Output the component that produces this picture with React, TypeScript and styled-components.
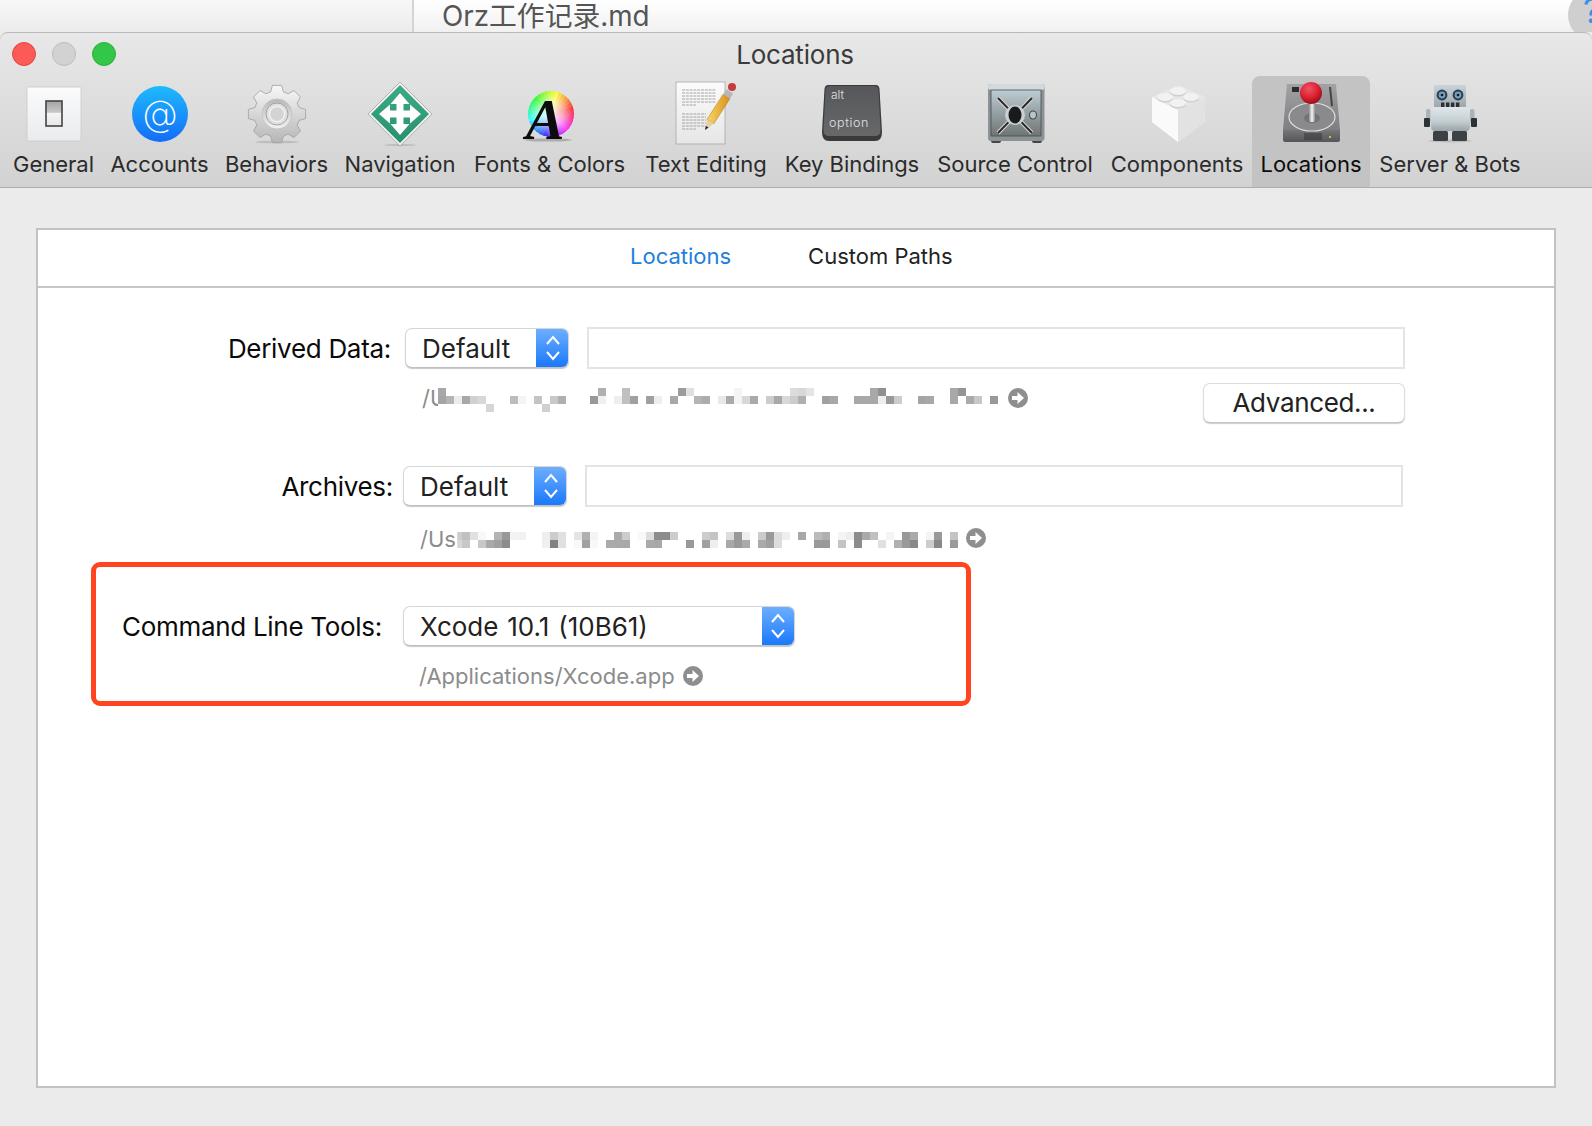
import React from 'react';
import styled, { createGlobalStyle } from 'styled-components';

const GlobalStyle = createGlobalStyle`
  html, body {
    margin: 0;
    padding: 0;
    background: #ebebeb;
    overflow: hidden;
  }
  * {
    box-sizing: border-box;
  }
  body {
    font-family: Inter, "Noto Sans CJK SC", "Liberation Sans", sans-serif;
    color: #222;
  }
`;

const Page = styled.div`
  width: 1592px;
  height: 1126px;
  display: flex;
  flex-direction: column;
`;

const TopStrip = styled.div`
  position: relative;
  height: 32px;
  display: flex;
  overflow: hidden;
  background: linear-gradient(#ffffff, #f1f1f1);
`;

const StripSide = styled.div`
  width: 414px;
  border-right: 2px solid #d4d4d4;
  background: linear-gradient(#f7f7f7, #ececec);
`;

const FileName = styled.div`
  padding: 0 0 0 28px;
  font-size: 27.8px;
  line-height: 32px;
  color: #555;
`;

const HelpBubble = styled.div`
  position: absolute;
  left: 1568px;
  top: -11px;
  width: 52px;
  height: 52px;
  border-radius: 50%;
  background: #cfcfcf;
  color: #3b8fe8;
  font-size: 34px;
  line-height: 44px;
  padding-left: 15px;
`;

const Window = styled.div`
  height: 156px;
  display: flex;
  flex-direction: column;
  border-top: 1px solid #b9b9b9;
  border-bottom: 1px solid #adadad;
  border-radius: 8px 8px 0 0;
  background: linear-gradient(#e8e8e8, #d2d2d2);
`;

const TitleBar = styled.div`
  height: 43px;
  display: grid;
  grid-template-columns: 1fr auto 1fr;
  align-items: center;
  padding: 0 14px 0 12px;
`;

const Lights = styled.div`
  display: flex;
  gap: 16px;
  margin-bottom: 2px;
`;

const Light = styled.span<{ $fill: string; $edge: string }>`
  width: 24px;
  height: 24px;
  border-radius: 50%;
  background: ${(p) => p.$fill};
  border: 1px solid ${(p) => p.$edge};
`;

const Title = styled.div`
  font-size: 26px;
  line-height: 32px;
  color: #3b3b3b;
  letter-spacing: -0.2px;
`;

const Toolbar = styled.div`
  flex: 1;
  display: flex;
  padding-left: 4px;
`;

const ToolItem = styled.div<{ $w: number; $active?: boolean }>`
  width: ${(p) => p.$w}px;
  display: flex;
  flex-direction: column;
  align-items: center;
  padding-top: 4px;
  border-radius: 8px 8px 0 0;
  background: ${(p) => (p.$active ? '#c3c3c3' : 'transparent')};
  color: ${(p) => (p.$active ? '#0c0c0c' : '#2b2b2b')};
  svg {
    display: block;
    overflow: visible;
  }
`;

const ToolLabel = styled.div`
  margin-top: 6px;
  font-size: 22px;
  line-height: 28px;
  white-space: nowrap;
`;

const Main = styled.main`
  flex: 1;
  padding: 40px 36px 38px;
`;

const Panel = styled.section`
  height: 100%;
  background: #fff;
  border: 2px solid #c2c2c2;
`;

const Tabs = styled.div`
  height: 58px;
  display: flex;
  align-items: center;
  gap: 77px;
  padding: 0 0 4px 592px;
  border-bottom: 2px solid #c8c8c8;
`;

const Tab = styled.div<{ $active?: boolean }>`
  font-size: 22px;
  line-height: 28px;
  color: ${(p) => (p.$active ? '#1c7fdc' : '#222')};
`;

const Form = styled.div`
  display: flex;
  flex-direction: column;
  padding-top: 39px;
`;

const Row = styled.div<{ $shift?: number }>`
  display: flex;
  align-items: center;
  margin-left: ${(p) => p.$shift || 0}px;
`;

const RowLabel = styled.label<{ $w?: number; $gap: number }>`
  ${(p) => (p.$w ? `width: ${p.$w}px;` : '')}
  margin-right: ${(p) => p.$gap}px;
  padding-top: 2px;
  text-align: right;
  font-size: 26px;
  line-height: 32px;
  letter-spacing: -0.3px;
  color: #0a0a0a;
  white-space: nowrap;
`;

const Select = styled.div<{ $w: number }>`
  width: ${(p) => p.$w}px;
  height: 40px;
  display: flex;
  justify-content: space-between;
  align-items: stretch;
  border-radius: 7px;
  background: #fff;
  border: 1px solid #d6d6d6;
  border-bottom-color: #c0c0c0;
  box-shadow: 0 1px 1px rgba(0, 0, 0, 0.22);
  font-size: 26px;
  line-height: 40px;
  color: #222;
  overflow: hidden;
`;

const SelectValue = styled.span`
  padding-left: 16px;
  word-spacing: 1.5px;
`;

const Stepper = styled.span`
  width: 33px;
  margin: -1px -1px -1px 0;
  display: flex;
  align-items: center;
  justify-content: center;
  background: linear-gradient(#6fb0ff, #1877fb);
`;

const Field = styled.div`
  width: 818px;
  height: 42px;
  margin-left: 18px;
  background: #fff;
  border: 2px solid #e4e4e4;
`;

const PathRow = styled.div<{ $left: number; $top: number; $bottom: number }>`
  display: flex;
  align-items: flex-start;
  margin: ${(p) => `${p.$top}px 0 ${p.$bottom}px ${p.$left}px`};
`;

const PathText = styled.span<{ $w?: number }>`
  font-size: 22px;
  line-height: 30px;
  color: #8c8c8c;
  white-space: nowrap;
  ${(p) => (p.$w ? `width: ${p.$w}px;` : '')}
`;

const MosaicSvg = styled.svg<{ $top: number }>`
  display: block;
  flex: none;
  margin-top: ${(p) => p.$top}px;
  overflow: visible;
  filter: blur(0.5px);
`;

const GoIcon = styled.svg<{ $left: number; $top: number }>`
  flex: none;
  margin: ${(p) => `${p.$top}px 0 0 ${p.$left}px`};
`;

const AdvancedButton = styled.button`
  width: 202px;
  height: 40px;
  margin-left: auto;
  margin-right: 149px;
  padding: 0 0 2px;
  border-radius: 7px;
  background: #fff;
  border: 1px solid #dcdcdc;
  border-bottom-color: #c4c4c4;
  box-shadow: 0 1px 1px rgba(0, 0, 0, 0.2);
  font-family: inherit;
  font-size: 26px;
  letter-spacing: -0.35px;
  color: #222;
`;

const Callout = styled.div`
  width: 880px;
  height: 144px;
  margin-left: 53px;
  padding: 39px 0 0 26px;
  border: 5px solid #ff451f;
  border-radius: 9px;
`;

const SwitchIcon = () => (
  <svg width={64} height={64} viewBox="0 0 64 64">
    <defs>
      <linearGradient id="plate" x1="0" y1="0" x2="0" y2="1">
        <stop offset="0" stopColor="#fbfbfc" />
        <stop offset="1" stopColor="#e9ebee" />
      </linearGradient>
      <linearGradient id="rocker" x1="0" y1="0" x2="0" y2="1">
        <stop offset="0" stopColor="#a4a4a4" />
        <stop offset="0.45" stopColor="#c8c8c8" />
        <stop offset="0.5" stopColor="#f4f4f4" />
        <stop offset="1" stopColor="#e8e8e8" />
      </linearGradient>
    </defs>
    <rect x={5} y={7} width={54} height={54} fill="url(#plate)" stroke="#c9c9c9" strokeWidth={0.8} rx={1} />
    <rect x={24} y={21} width={16} height={25} fill="url(#rocker)" stroke="#444" strokeWidth={1.6} />
  </svg>
);

const AtIcon = () => (
  <svg width={64} height={64} viewBox="0 0 64 64">
    <defs>
      <linearGradient id="atFill" x1="0" y1="0" x2="0" y2="1">
        <stop offset="0" stopColor="#1fbafc" />
        <stop offset="1" stopColor="#136df8" />
      </linearGradient>
    </defs>
    <circle cx={32} cy={34} r={28} fill="url(#atFill)" />
    <text x={32} y={46} textAnchor="middle" fontFamily="Inter, sans-serif" fontWeight={200} fontSize={36} fill="#fff">
      @
    </text>
  </svg>
);

const gearPath = (cx: number, cy: number, teeth: number, outer: number, inner: number) => {
  const pts: string[] = [];
  const step = (Math.PI * 2) / teeth;
  for (let i = 0; i < teeth; i++) {
    const a = i * step - Math.PI / 2;
    [
      [inner, -0.5],
      [outer, -0.28],
      [outer, 0.28],
      [inner, 0.5],
    ].forEach(([r, k]) => {
      const t = a + k * step * 0.72;
      pts.push(`${(cx + r * Math.cos(t)).toFixed(1)} ${(cy + r * Math.sin(t)).toFixed(1)}`);
    });
  }
  return `M${pts.join('L')}Z`;
};

const GearIcon = () => (
  <svg width={64} height={64} viewBox="0 0 64 64">
    <defs>
      <linearGradient id="gearFill" x1="0" y1="0" x2="0" y2="1">
        <stop offset="0" stopColor="#f8f8f8" />
        <stop offset="1" stopColor="#b6b6b6" />
      </linearGradient>
      <linearGradient id="gearRing" x1="0" y1="0" x2="0" y2="1">
        <stop offset="0" stopColor="#b8b8b8" />
        <stop offset="1" stopColor="#f2f2f2" />
      </linearGradient>
    </defs>
    <ellipse cx={32} cy={62} rx={22} ry={1.5} fill="#000" opacity={0.12} />
    <path d={gearPath(32, 34, 8, 29, 23)} fill="url(#gearFill)" stroke="#a0a0a0" strokeWidth={0.8} />
    <circle cx={32} cy={34} r={15} fill="url(#gearRing)" stroke="#c0c0c0" strokeWidth={0.8} />
    <circle cx={32} cy={34} r={11} fill="#e0e0e0" stroke="#a4a4a4" strokeWidth={1} />
    <circle cx={32} cy={34} r={7.5} fill="#d4d4d4" stroke="#f4f4f4" strokeWidth={1.2} />
  </svg>
);

const NavIcon = () => (
  <svg width={64} height={64} viewBox="0 0 64 64">
    <defs>
      <linearGradient id="navFill" x1="0" y1="0" x2="0" y2="1">
        <stop offset="0" stopColor="#3cab84" />
        <stop offset="1" stopColor="#27926c" />
      </linearGradient>
    </defs>
    <ellipse cx={32} cy={65} rx={16} ry={1.2} fill="#000" opacity={0.12} />
    <path d="M32 2 L64 34 L32 66 L0 34 Z" fill="#f2f2f2" stroke="#a2a2a2" strokeWidth={0.8} strokeLinejoin="round" />
    <path d="M32 5 L61 34 L32 63 L3 34 Z" fill="url(#navFill)" />
    <path
      d="M32 13 L41.5 24 L35.5 24 L35.5 30.5 L42 30.5 L42 24.5 L53 34 L42 43.5 L42 37.5 L35.5 37.5 L35.5 44 L41.5 44 L32 55 L22.5 44 L28.5 44 L28.5 37.5 L22 37.5 L22 43.5 L11 34 L22 24.5 L22 30.5 L28.5 30.5 L28.5 24 L22.5 24 Z"
      fill="#fff"
    />
  </svg>
);

const wheelWedges = Array.from({ length: 36 }, (_, i) => {
  const a0 = (i * 10 * Math.PI) / 180;
  const a1 = ((i + 1.2) * 10 * Math.PI) / 180;
  const cx = 33;
  const cy = 34;
  const r = 23;
  // angle runs counter-clockwise from the top of the wheel
  const d = `M${cx} ${cy}L${cx - r * Math.sin(a0)} ${cy - r * Math.cos(a0)}L${cx - r * Math.sin(a1)} ${cy - r * Math.cos(a1)}Z`;
  return { d, fill: `hsl(${(80 + i * 10) % 360}, 95%, 58%)` };
});

const FontsIcon = () => (
  <svg width={64} height={64} viewBox="0 0 64 64">
    <defs>
      <radialGradient id="wheelGlow">
        <stop offset="0" stopColor="#fff" stopOpacity={0.95} />
        <stop offset="0.55" stopColor="#fff" stopOpacity={0.55} />
        <stop offset="1" stopColor="#fff" stopOpacity={0} />
      </radialGradient>
    </defs>
    <ellipse cx={30} cy={60} rx={24} ry={1.6} fill="#000" opacity={0.2} />
    {wheelWedges.map((w) => (
      <path key={w.d} d={w.d} fill={w.fill} />
    ))}
    <circle cx={33} cy={34} r={23} fill="url(#wheelGlow)" />
    <text
      x={27}
      y={59}
      textAnchor="middle"
      fontFamily="'Liberation Serif', serif"
      fontStyle="italic"
      fontWeight={700}
      fontSize={58}
      fill="#0c0c0c"
    >
      A
    </text>
  </svg>
);

const textLines = [10, 13, 16, 19, 22, 25, 34, 37, 40, 43, 46, 49];

const EditIcon = () => (
  <svg width={64} height={64} viewBox="0 0 64 64">
    <defs>
      <linearGradient id="paper" x1="0" y1="0" x2="0" y2="1">
        <stop offset="0" stopColor="#fbfbfb" />
        <stop offset="1" stopColor="#e6e6e6" />
      </linearGradient>
      <linearGradient id="pencil" x1="0" y1="0" x2="1" y2="0">
        <stop offset="0" stopColor="#f9d763" />
        <stop offset="1" stopColor="#d98f1c" />
      </linearGradient>
    </defs>
    <rect x={2} y={2} width={49} height={62} fill="url(#paper)" stroke="#a8a8a8" strokeWidth={0.8} />
    {textLines.map((y, i) => (
      <line
        key={y}
        x1={8}
        x2={i % 6 === 5 ? 22 : 42 - (i > 5 ? 10 : 0)}
        y1={y}
        y2={y}
        stroke="#a4a4a4"
        strokeWidth={1}
        strokeDasharray="3 0.8"
      />
    ))}
    <path d="M33 39.4 L49.2 14.2 L56 18.6 L39.8 43.8 Z" fill="url(#pencil)" stroke="#a8761c" strokeWidth={0.5} />
    <path d="M31 50 L33 39.4 L39.8 43.8 Z" fill="#e8cfa8" />
    <path d="M31 50 L31.8 46 L34.6 47.6 Z" fill="#222" />
    <path d="M49.2 14.2 L52.4 9.2 L59.2 13.6 L56 18.6 Z" fill="#b4b8bc" />
    <circle cx={58} cy={7} r={4} fill="#c43c3c" />
  </svg>
);

const KeyIcon = () => (
  <svg width={64} height={64} viewBox="0 0 64 64">
    <defs>
      <linearGradient id="keyTop" x1="0" y1="0" x2="0" y2="1">
        <stop offset="0" stopColor="#55575a" />
        <stop offset="1" stopColor="#666869" />
      </linearGradient>
    </defs>
    <path d="M8 5 L56 5 Q59 5 59.5 9 L62 52 Q62 61 55 61 L9 61 Q2 61 2 52 L4.5 9 Q5 5 8 5 Z" fill="#3a3a3b" />
    <path d="M9 6 L55 6 Q58 6 58.5 10 L60.5 50 Q60.5 56 55 56 L9 56 Q3.5 56 3.5 50 L5.5 10 Q6 6 9 6 Z" fill="url(#keyTop)" />
    <text x={11} y={19} fontFamily="Inter, sans-serif" fontWeight={300} fontSize={12} fill="#e2e2e2">
      alt
    </text>
    <text x={9} y={47} fontFamily="Inter, sans-serif" fontWeight={300} fontSize={12.5} letterSpacing={0.6} fill="#e2e2e2">
      option
    </text>
  </svg>
);

const SafeIcon = () => (
  <svg width={64} height={64} viewBox="0 0 64 64">
    <defs>
      <linearGradient id="safeBody" x1="0" y1="0" x2="0" y2="1">
        <stop offset="0" stopColor="#bdcdd3" />
        <stop offset="1" stopColor="#6f7474" />
      </linearGradient>
    </defs>
    <rect x={8} y={59} width={10} height={4} rx={2} fill="#444" />
    <rect x={49} y={59} width={10} height={4} rx={2} fill="#444" />
    <rect x={5} y={4} width={56.5} height={57} rx={3} fill="#8c9395" />
    <rect x={5} y={4} width={56.5} height={6} rx={3} fill="#d4dadc" />
    <rect x={8} y={10} width={50} height={46} fill="url(#safeBody)" stroke="#444c50" strokeWidth={0.8} />
    <path d="M15 18 L49 53 M49 18 L15 53" stroke="#d8d8d8" strokeWidth={4} />
    <path d="M15 18 L49 53 M49 18 L15 53" stroke="#2a2a2a" strokeWidth={2} />
    <circle cx={32} cy={35} r={10} fill="#c8d0d4" />
    <ellipse cx={32} cy={35} rx={6.5} ry={8.5} fill="#1a1a1a" />
    <ellipse cx={50} cy={35} rx={4} ry={4.6} fill="#3d4446" />
    <ellipse cx={50} cy={35} rx={3} ry={3.4} fill="#b8c4c8" />
  </svg>
);

const BrickIcon = () => (
  <svg width={64} height={64} viewBox="0 0 64 64">
    <path d="M7 17 L33 5 L60 17 L60 42 L33 62 L7 42 Z" fill="#f0f0f0" />
    <path d="M7 17 L33 30 L33 62 L7 42 Z" fill="#fafafa" />
    <path d="M60 17 L33 30 L33 62 L60 42 Z" fill="#e2e2e2" />
    <path d="M7 17 L33 5 L60 17 L33 30 Z" fill="#e6e6e6" />
    {[
      [33, 11],
      [20, 17],
      [46, 17],
      [33, 23],
    ].map(([x, y]) => (
      <g key={`${x}-${y}`}>
        <ellipse cx={x} cy={y + 1.5} rx={8} ry={4} fill="#cfcfcf" />
        <ellipse cx={x} cy={y} rx={8} ry={4} fill="#f2f2f2" />
      </g>
    ))}
  </svg>
);

const DriveIcon = () => (
  <svg width={64} height={64} viewBox="0 0 64 64">
    <defs>
      <linearGradient id="driveTop" x1="0" y1="0" x2="0" y2="1">
        <stop offset="0" stopColor="#a2a2a4" />
        <stop offset="1" stopColor="#7e7e80" />
      </linearGradient>
      <linearGradient id="driveFront" x1="0" y1="0" x2="0" y2="1">
        <stop offset="0" stopColor="#767678" />
        <stop offset="1" stopColor="#56565a" />
      </linearGradient>
      <radialGradient id="ball" cx="0.4" cy="0.3" r="0.75">
        <stop offset="0" stopColor="#f25464" />
        <stop offset="0.6" stopColor="#d81e2e" />
        <stop offset="1" stopColor="#8e0c18" />
      </radialGradient>
      <linearGradient id="stick" x1="0" y1="0" x2="1" y2="0">
        <stop offset="0" stopColor="#8f8f8f" />
        <stop offset="0.5" stopColor="#f5f5f5" />
        <stop offset="1" stopColor="#8f8f8f" />
      </linearGradient>
    </defs>
    <path d="M8 4 L57 4 L61 50 L4 50 Z" fill="url(#driveTop)" />
    <path d="M4 50 L61 50 L61 60 Q61 62 59 62 L6 62 Q4 62 4 60 Z" fill="url(#driveFront)" />
    <ellipse cx={33} cy={37} rx={23} ry={14} fill="#8a8a8d" stroke="#dedede" strokeWidth={1.2} />
    <ellipse cx={33} cy={38} rx={8} ry={5} fill="#737377" />
    <rect x={13} y={7} width={7} height={5} fill="#2d2d2d" />
    <path d="M50 7 L52 7 L54 26 L52 26 Z" fill="#444" />
    <rect x={30} y={20} width={6} height={22} rx={2} fill="url(#stick)" />
    <circle cx={32} cy={13} r={11} fill="url(#ball)" />
    {[26, 28, 30, 32, 34, 36, 38, 40, 42].map((x) => (
      <line key={x} x1={x} x2={x} y1={53} y2={60} stroke="#2a2a2a" strokeWidth={0.8} />
    ))}
    <circle cx={51} cy={57} r={1} fill="#e6e04a" />
  </svg>
);

const RobotIcon = () => (
  <svg width={64} height={64} viewBox="0 0 64 64">
    <defs>
      <linearGradient id="botBody" x1="0" y1="0" x2="0" y2="1">
        <stop offset="0" stopColor="#dfe7ea" />
        <stop offset="0.6" stopColor="#c4ced2" />
        <stop offset="1" stopColor="#98a4a8" />
      </linearGradient>
      <linearGradient id="botHead" x1="0" y1="0" x2="0" y2="1">
        <stop offset="0" stopColor="#c8d4da" />
        <stop offset="1" stopColor="#98a6ac" />
      </linearGradient>
    </defs>
    <ellipse cx={32} cy={61} rx={22} ry={1.5} fill="#000" opacity={0.12} />
    <rect x={16} y={5} width={32} height={23} rx={1.5} fill="url(#botHead)" />
    {[24, 40].map((x) => (
      <g key={x}>
        <circle cx={x} cy={15} r={5.4} fill="#2f3a42" />
        <circle cx={x} cy={15} r={3.4} fill="#6f9fc4" />
        <circle cx={x} cy={15} r={1.3} fill="#10181e" />
      </g>
    ))}
    {[23, 28, 33, 38].map((x) => (
      <rect key={x} x={x} y={22.5} width={3.4} height={5} fill="#2c3034" />
    ))}
    <rect x={8} y={29} width={4.5} height={14} rx={2} fill="#aab4b8" />
    <rect x={52} y={29} width={4.5} height={14} rx={2} fill="#aab4b8" />
    <rect x={6} y={38} width={6} height={9} rx={1} fill="#2e3236" />
    <rect x={53} y={38} width={6} height={9} rx={1} fill="#2e3236" />
    <rect x={13} y={27} width={39} height={24} rx={4} fill="url(#botBody)" />
    <rect x={15} y={51} width={15} height={10} rx={1.5} fill="#3c4143" />
    <rect x={34} y={51} width={15} height={10} rx={1.5} fill="#3c4143" />
  </svg>
);

const tools = [
  { label: 'General', w: 99, icon: <SwitchIcon /> },
  { label: 'Accounts', w: 113, icon: <AtIcon /> },
  { label: 'Behaviors', w: 121, icon: <GearIcon /> },
  { label: 'Navigation', w: 126, icon: <NavIcon /> },
  { label: 'Fonts & Colors', w: 173, icon: <FontsIcon /> },
  { label: 'Text Editing', w: 140, icon: <EditIcon /> },
  { label: 'Key Bindings', w: 152, icon: <KeyIcon /> },
  { label: 'Source Control', w: 174, icon: <SafeIcon /> },
  { label: 'Components', w: 150, icon: <BrickIcon /> },
  { label: 'Locations', w: 118, icon: <DriveIcon />, active: true },
  { label: 'Server & Bots', w: 160, icon: <RobotIcon /> },
];

type Cell = [number, number, number];

// the blurred-out part of the paths: column, row, grey level
const derivedCells: Cell[] = [
  [0, 0, 168], [20, 0, 176], [23, 0, 192], [30, 0, 156], [31, 0, 224], [37, 0, 244], [44, 0, 220], [45, 0, 216], [46, 0, 228],
  [54, 0, 168], [55, 0, 144], [64, 0, 168], [65, 0, 149],
  [0, 1, 164], [1, 1, 180], [2, 1, 236], [3, 1, 168], [4, 1, 208], [5, 1, 216], [9, 1, 188], [10, 1, 244], [12, 1, 196],
  [14, 1, 200], [15, 1, 176], [19, 1, 153], [20, 1, 240], [22, 1, 238], [23, 1, 192], [24, 1, 160], [26, 1, 160], [27, 1, 238],
  [29, 1, 168], [32, 1, 180], [33, 1, 172], [35, 1, 232], [36, 1, 170], [37, 1, 244], [38, 1, 216], [39, 1, 170], [41, 1, 204],
  [42, 1, 168], [43, 1, 216], [44, 1, 204], [45, 1, 176], [48, 1, 160], [49, 1, 168], [52, 1, 168], [53, 1, 168], [54, 1, 168],
  [55, 1, 238], [56, 1, 153], [57, 1, 204], [60, 1, 164], [61, 1, 168], [64, 1, 168], [66, 1, 170], [67, 1, 200], [69, 1, 153],
  [0, 2, 255], [6, 2, 214], [13, 2, 208],
];

const archiveCells: Cell[] = [
  [-0.6, 0, 205], [-0.6, 1, 215],
  [0, 0, 192], [1, 0, 224], [2, 0, 248], [4, 0, 180], [5, 0, 153], [6, 0, 244], [7, 0, 242], [10, 0, 238], [11, 0, 204],
  [12, 0, 224], [14, 0, 228], [15, 0, 176], [16, 0, 244], [19, 0, 170], [20, 0, 204], [22, 0, 248], [23, 0, 221], [24, 0, 140],
  [25, 0, 140], [26, 0, 204], [30, 0, 204], [31, 0, 196], [33, 0, 221], [34, 0, 153], [35, 0, 238], [37, 0, 204], [38, 0, 153],
  [39, 0, 221], [40, 0, 238], [42, 0, 168], [44, 0, 187], [45, 0, 176], [47, 0, 244], [48, 0, 238], [49, 0, 140], [50, 0, 170],
  [51, 0, 192], [53, 0, 244], [55, 0, 153], [56, 0, 170], [58, 0, 244], [59, 0, 153], [61, 0, 196],
  [0, 1, 200], [2, 1, 200], [3, 1, 170], [4, 1, 160], [5, 1, 140], [10, 1, 240], [11, 1, 128], [12, 1, 224], [14, 1, 248],
  [15, 1, 160], [16, 1, 248], [18, 1, 170], [19, 1, 170], [20, 1, 168], [23, 1, 170], [24, 1, 168], [28, 1, 153], [30, 1, 160],
  [31, 1, 238], [33, 1, 168], [34, 1, 153], [35, 1, 170], [37, 1, 170], [38, 1, 160], [39, 1, 221], [44, 1, 153], [45, 1, 153],
  [47, 1, 196], [49, 1, 140], [52, 1, 224], [54, 1, 176], [55, 1, 153], [56, 1, 136], [58, 1, 204], [59, 1, 136], [61, 1, 153],
];

const Mosaic = ({ cells, cols, rows, top }: { cells: Cell[]; cols: number; rows: number; top: number }) => (
  <MosaicSvg $top={top} width={cols * 8} height={rows * 8} viewBox={`0 0 ${cols * 8} ${rows * 8}`}>
    {cells.map(([c, r, g]) => (
      <rect key={`${c}-${r}`} x={c * 8} y={r * 8} width={8} height={8} fill={`rgb(${g},${g},${g})`} />
    ))}
  </MosaicSvg>
);

const GoArrow = ({ left, top }: { left: number; top: number }) => (
  <GoIcon $left={left} $top={top} width={20} height={20} viewBox="0 0 20 20">
    <circle cx={10} cy={10} r={10} fill="#8e8e8e" />
    <path d="M4 8 L9.5 8 L9.5 4 L16 10 L9.5 16 L9.5 12 L4 12 Z" fill="#fff" />
  </GoIcon>
);

const UpDown = () => (
  <svg width={16} height={30} viewBox="0 0 16 30" fill="none" stroke="#fff" strokeWidth={2}>
    <path d="M2 11 L8 4 L14 11" />
    <path d="M2 19 L8 26 L14 19" />
  </svg>
);

const App: React.FC = () => {
  return (
    <Page>
      <GlobalStyle />
      <TopStrip>
        <StripSide />
        <FileName>Orz工作记录.md</FileName>
        <HelpBubble>?</HelpBubble>
      </TopStrip>
      <Window>
        <TitleBar>
          <Lights>
            <Light $fill="#fc5a56" $edge="#e5453f" />
            <Light $fill="#d2d2d2" $edge="#bdbdbd" />
            <Light $fill="#33c748" $edge="#2bb03c" />
          </Lights>
          <Title>Locations</Title>
        </TitleBar>
        <Toolbar>
          {tools.map((t) => (
            <ToolItem key={t.label} $w={t.w} $active={t.active}>
              {t.icon}
              <ToolLabel>{t.label}</ToolLabel>
            </ToolItem>
          ))}
        </Toolbar>
      </Window>
      <Main>
        <Panel>
          <Tabs>
            <Tab $active>Locations</Tab>
            <Tab>Custom Paths</Tab>
          </Tabs>
          <Form>
            <Row $shift={3}>
              <RowLabel $w={350} $gap={14}>
                Derived Data:
              </RowLabel>
              <Select $w={164}>
                <SelectValue>Default</SelectValue>
                <Stepper>
                  <UpDown />
                </Stepper>
              </Select>
              <Field />
            </Row>
            <PathRow $left={384} $top={14} $bottom={42}>
              <PathText $w={16}>/U</PathText>
              <Mosaic cells={derivedCells} cols={70} rows={3} top={5} />
              <GoArrow left={10} top={5} />
              <AdvancedButton>Advanced...</AdvancedButton>
            </PathRow>
            <Row $shift={1}>
              <RowLabel $w={354} $gap={10}>
                Archives:
              </RowLabel>
              <Select $w={164}>
                <SelectValue>Default</SelectValue>
                <Stepper>
                  <UpDown />
                </Stepper>
              </Select>
              <Field />
            </Row>
            <PathRow $left={382} $top={17} $bottom={8}>
              <PathText $w={42}>/Us</PathText>
              <Mosaic cells={archiveCells} cols={62} rows={2} top={8} />
              <GoArrow left={8} top={4} />
            </PathRow>
            <Callout>
              <Row>
                <RowLabel $gap={21}>Command Line Tools:</RowLabel>
                <Select $w={392}>
                  <SelectValue>Xcode 10.1 (10B61)</SelectValue>
                  <Stepper>
                    <UpDown />
                  </Stepper>
                </Select>
              </Row>
              <PathRow $left={297} $top={15} $bottom={0}>
                <PathText>/Applications/Xcode.app</PathText>
                <GoArrow left={8} top={5} />
              </PathRow>
            </Callout>
          </Form>
        </Panel>
      </Main>
    </Page>
  );
};

export default App;
